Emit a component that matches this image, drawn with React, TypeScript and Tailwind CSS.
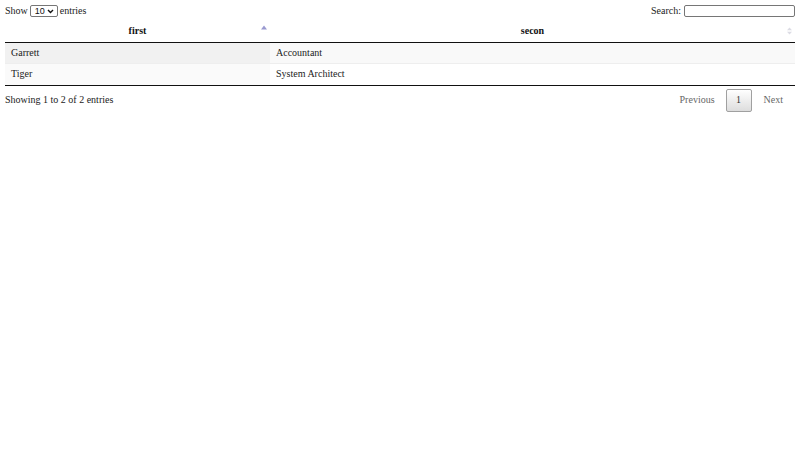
import React from 'react';

const SortBoth = () => (
    <svg width="5" height="8" viewBox="0 0 5 8" className="absolute right-[3px] top-1/2 -translate-y-1/2">
        <polygon points="2.5,0.5 5,3.3 0,3.3" fill="#dcdce4" />
        <polygon points="2.5,7.5 5,4.7 0,4.7" fill="#dcdce4" />
    </svg>
);

const SortAsc = () => (
    <svg width="6" height="5" viewBox="0 0 6 5" className="absolute right-[3px] top-[5px]">
        <polygon points="3,0.5 6,4.5 0,4.5" fill="#9a9ad0" />
    </svg>
);

const rows = [
    { first: 'Garrett', second: 'Accountant' },
    { first: 'Tiger', second: 'System Architect' },
];

const App: React.FC = () => {
    return (
        <div className="w-[800px] h-[450px] bg-white text-[10px] leading-[12px] text-[#222] px-[5px] font-['Liberation_Serif',serif]">
            {/* top controls */}
            <div className="flex justify-between items-center h-[20px] pt-[2px]">
                <label className="flex items-center gap-[2px]">
                    Show
                    <span className="relative inline-flex">
                        <select
                            className="appearance-none border border-[#767676] rounded-[2px] text-[9px] h-[12px] w-[28px] pl-[4px] pr-0 leading-[10px] bg-white font-['Liberation_Sans',sans-serif] text-[#111]"
                            defaultValue="10"
                        >
                            <option>10</option>
                            <option>25</option>
                            <option>50</option>
                            <option>100</option>
                        </select>
                        <svg width="7" height="5" viewBox="0 0 7 5" className="absolute right-[4px] top-[4px] pointer-events-none">
                            <polyline points="1,1 3.5,3.5 6,1" fill="none" stroke="#111" strokeWidth="1.4" />
                        </svg>
                    </span>
                    entries
                </label>
                <label className="flex items-center gap-[3px]">
                    Search:
                    <input className="w-[111px] h-[12px] border border-[#767676] rounded-[2px]" />
                </label>
            </div>

            <table className="w-full border-collapse">
                <thead>
                    <tr className="border-b border-[#111]">
                        <th className="relative w-[265px] h-[22px] p-0 font-bold text-[#111] text-center">
                            first
                            <SortAsc />
                        </th>
                        <th className="relative h-[22px] p-0 font-bold text-[#111] text-center">
                            secon
                            <SortBoth />
                        </th>
                    </tr>
                </thead>
                <tbody>
                    {rows.map((r, i) => (
                        <tr key={r.first} className={i % 2 === 0 ? 'bg-[#f9f9f9] h-[21px]' : 'bg-white border-t border-[#eeeeee] h-[22px]'}>
                            <td className={`py-0 px-[6px] ${i % 2 === 0 ? 'bg-[#f1f1f1]' : 'bg-[#fafafa]'}`}>{r.first}</td>
                            <td className="py-0 px-[6px]">{r.second}</td>
                        </tr>
                    ))}
                </tbody>
                <tfoot>
                    <tr className="border-t border-[#111]"><td colSpan={2} className="h-0 p-0"></td></tr>
                </tfoot>
            </table>

            <div className="flex justify-between items-start pt-[3px]">
                <div className="pt-[5px]">Showing 1 to 2 of 2 entries</div>
                <div className="flex items-center text-[#666]">
                    <span className="px-[11px]">Previous</span>
                    <span className="w-[26px] h-[23px] flex items-center justify-center border border-[#a0a0a0] rounded-[2px] text-[#333] bg-gradient-to-b from-white to-[#dddddd]">1</span>
                    <span className="pl-[12px] pr-[12px]">Next</span>
                </div>
            </div>
        </div>
    );
};

export default App;
